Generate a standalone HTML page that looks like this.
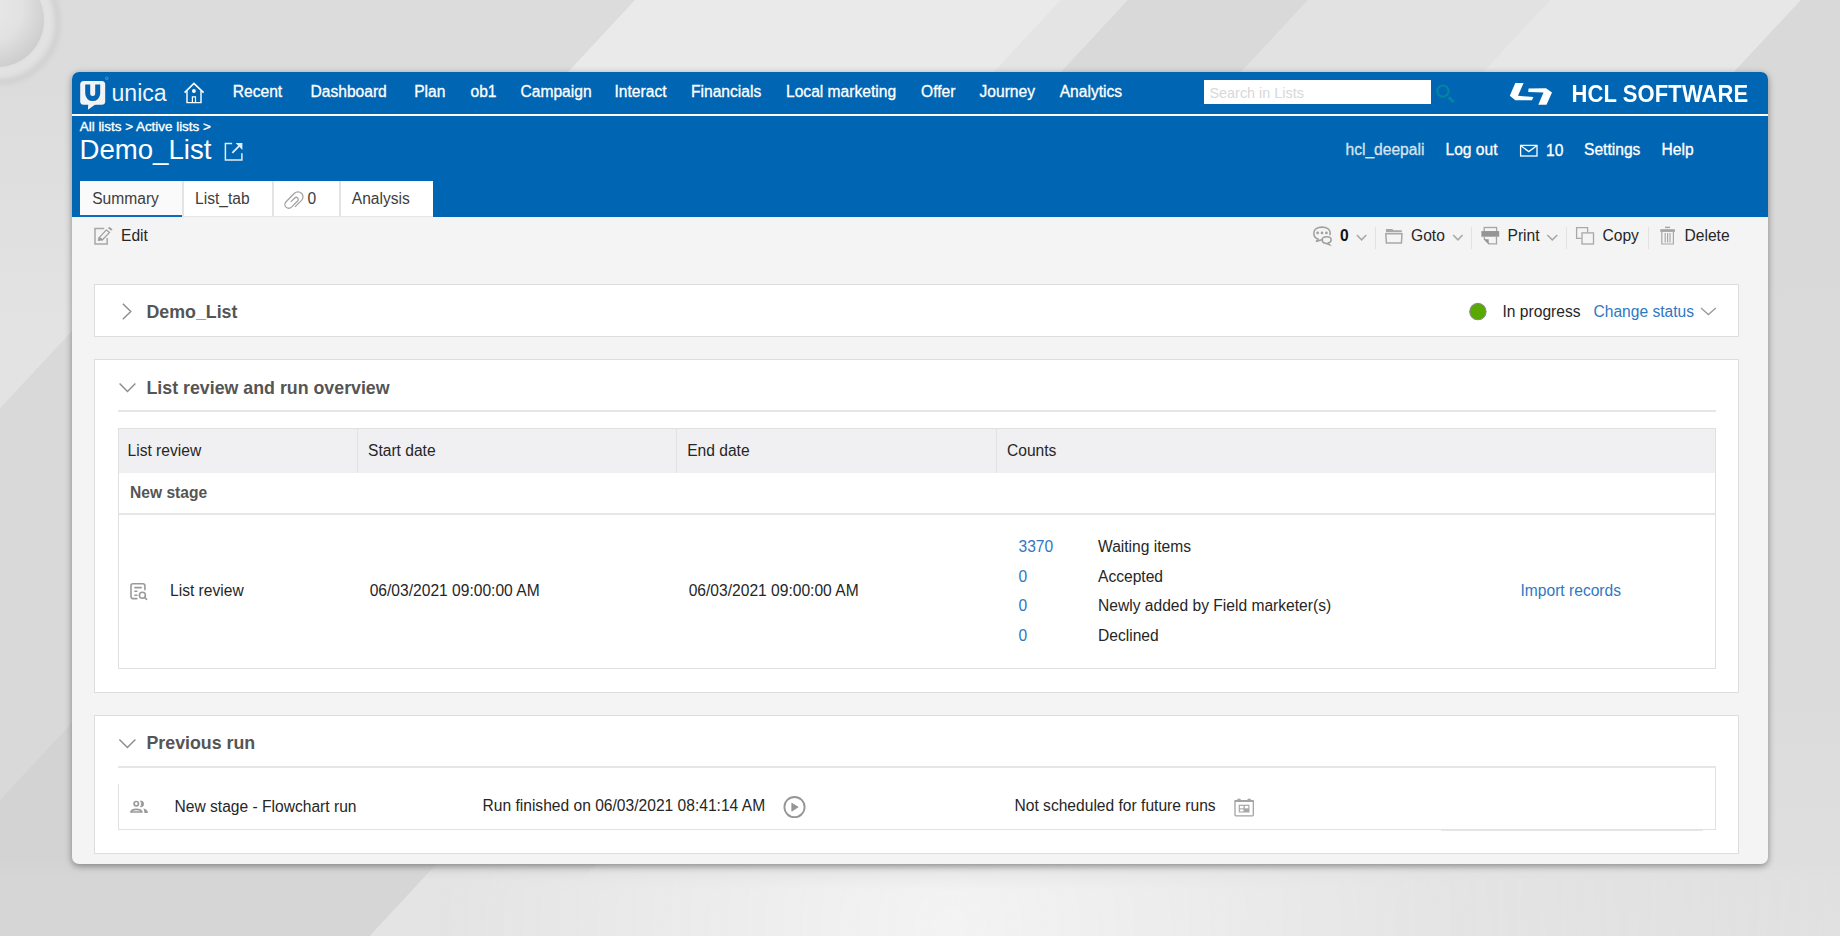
<!DOCTYPE html>
<html><head><meta charset="utf-8">
<style>
*{margin:0;padding:0;box-sizing:border-box}
html,body{width:1840px;height:936px;overflow:hidden}
body{position:relative;font-family:"Liberation Sans",sans-serif;background:#dcdcdc}
.a{position:absolute}
.t{position:absolute;white-space:nowrap;line-height:1}
#ov{position:absolute;left:0;top:0}
</style></head><body>
<svg width="1840" height="936" style="position:absolute;left:0;top:0">
<defs>
<linearGradient id="lgL" gradientUnits="userSpaceOnUse" x1="0" y1="90" x2="0" y2="330"><stop offset="0" stop-color="#dcdcdc"/><stop offset="1" stop-color="#e3e3e3"/></linearGradient>
<linearGradient id="lgB" gradientUnits="userSpaceOnUse" x1="0" y1="858" x2="0" y2="880"><stop offset="0" stop-color="#e4e4e4" stop-opacity="0"/><stop offset="1" stop-color="#e4e4e4"/></linearGradient><linearGradient id="lgBx" gradientUnits="userSpaceOnUse" x1="1400" y1="0" x2="1840" y2="0"><stop offset="0" stop-color="#fff"/><stop offset="1" stop-color="#fff" stop-opacity="0.25"/></linearGradient><mask id="mBx"><rect x="0" y="0" width="1840" height="936" fill="url(#lgBx)"/></mask>
<linearGradient id="lgB2" gradientUnits="userSpaceOnUse" x1="0" y1="858" x2="0" y2="880"><stop offset="0" stop-color="#d6d6d6" stop-opacity="0"/><stop offset="1" stop-color="#d6d6d6"/></linearGradient>
<radialGradient id="glow" cx="950" cy="925" r="520" gradientUnits="userSpaceOnUse"><stop offset="0" stop-color="#f3f3f3"/><stop offset="1" stop-color="#f3f3f3" stop-opacity="0"/></radialGradient>
<linearGradient id="glowfade" gradientUnits="userSpaceOnUse" x1="0" y1="860" x2="0" y2="890"><stop offset="0" stop-color="#fff" stop-opacity="0"/><stop offset="1" stop-color="#fff" stop-opacity="1"/></linearGradient>
<mask id="gm"><rect x="0" y="0" width="1840" height="936" fill="url(#glowfade)"/></mask>
<radialGradient id="orb" cx="-12" cy="8" r="62" gradientUnits="userSpaceOnUse"><stop offset="0" stop-color="#e8e8e8"/><stop offset="0.55" stop-color="#e2e2e2"/><stop offset="0.8" stop-color="#d6d6d6"/><stop offset="1" stop-color="#cdcdcd"/></radialGradient>
<linearGradient id="lgR" gradientUnits="userSpaceOnUse" x1="0" y1="80" x2="0" y2="936"><stop offset="0" stop-color="#d9d9d9"/><stop offset="0.7" stop-color="#dbdbdb"/><stop offset="1" stop-color="#e0e0e0"/></linearGradient>
<clipPath id="cpB"><rect x="0" y="0" width="1768" height="936"/></clipPath>
</defs>
<rect width="1840" height="936" fill="#dcdcdc"/>
<polygon points="635.0,0.0 1061.0,0.0 968.0,100.0 542.0,100.0" fill="#eaeaea" opacity="1"/>
<polygon points="1061.0,0.0 1128.0,0.0 1035.0,100.0 968.0,100.0" fill="#e4e4e4" opacity="1"/>
<polygon points="1128.0,0.0 1308.0,0.0 1215.0,100.0 1035.0,100.0" fill="#d9d9d9" opacity="1"/>
<polygon points="1308.0,0.0 1550.0,0.0 1457.0,100.0 1215.0,100.0" fill="#e2e2e2" opacity="1"/>
<polygon points="1550.0,0.0 1801.0,0.0 1708.0,100.0 1457.0,100.0" fill="#e7e7e7" opacity="1"/>
<polygon points="1801.0,0.0 3000.0,0.0 2129.5,936.0 930.5,936.0" fill="url(#lgR)" opacity="1"/>
<polygon points="-483.7,90.0 296.3,90.0 -103.6,520.0 -883.6,520.0" fill="url(#lgL)" opacity="1"/>
<polygon points="101.0,300.0 465.0,300.0 -126.5,936.0 -490.5,936.0" fill="#d9d9d9" opacity="1"/>
<polygon points="186.0,600.0 842.0,600.0 529.5,936.0 -126.5,936.0" fill="#d3d3d3" opacity="1"/>
<g><polygon points="-53.9,858.0 442.1,858.0 369.5,936.0 -126.5,936.0" fill="url(#lgB2)" opacity="1"/>
<g mask="url(#mBx)"><polygon points="442.1,858.0 2202.1,858.0 2129.5,936.0 369.5,936.0" fill="url(#lgB)" opacity="1"/>
</g></g><rect x="0" y="850" width="1840" height="86" fill="url(#glow)" mask="url(#gm)"/>
<filter id="bl3" x="-50%" y="-50%" width="200%" height="200%"><feGaussianBlur stdDeviation="2.5"/></filter>
<circle cx="-1" cy="23" r="59" fill="none" stroke="#cfcfcf" stroke-width="5" filter="url(#bl3)"/>
<circle cx="-3" cy="21" r="51" fill="none" stroke="#e3e3e3" stroke-width="9" filter="url(#bl3)"/>
<circle cx="-3" cy="20" r="47" fill="url(#orb)"/>
</svg>
<div class="a" style="left:72px;top:72px;width:1696px;height:792px;border-radius:7px;background:#f4f4f4;box-shadow:0 2px 7px rgba(0,0,0,.40)"></div>
<div class="a" style="left:72px;top:72px;width:1696px;height:42px;background:#0066b3;border-radius:7px 7px 0 0"></div>
<div class="a" style="left:72px;top:114px;width:1696px;height:2px;background:#fff"></div>
<div class="a" style="left:72px;top:116px;width:1696px;height:101px;background:#0066b3"></div>
<div class="t" style="left:232.8px;top:84.29px;font-size:15.6px;color:#fff;-webkit-text-stroke:0.3px #fff;">Recent</div>
<div class="t" style="left:310.5px;top:84.29px;font-size:15.6px;color:#fff;-webkit-text-stroke:0.3px #fff;">Dashboard</div>
<div class="t" style="left:414.2px;top:84.29px;font-size:15.6px;color:#fff;-webkit-text-stroke:0.3px #fff;">Plan</div>
<div class="t" style="left:470.5px;top:84.29px;font-size:15.6px;color:#fff;-webkit-text-stroke:0.3px #fff;">ob1</div>
<div class="t" style="left:520.5px;top:84.29px;font-size:15.6px;color:#fff;-webkit-text-stroke:0.3px #fff;">Campaign</div>
<div class="t" style="left:614.5px;top:84.29px;font-size:15.6px;color:#fff;-webkit-text-stroke:0.3px #fff;">Interact</div>
<div class="t" style="left:691.0px;top:84.29px;font-size:15.6px;color:#fff;-webkit-text-stroke:0.3px #fff;">Financials</div>
<div class="t" style="left:786.0px;top:84.29px;font-size:15.6px;color:#fff;-webkit-text-stroke:0.3px #fff;">Local marketing</div>
<div class="t" style="left:921.0px;top:84.29px;font-size:15.6px;color:#fff;-webkit-text-stroke:0.3px #fff;">Offer</div>
<div class="t" style="left:979.5px;top:84.29px;font-size:15.6px;color:#fff;-webkit-text-stroke:0.3px #fff;">Journey</div>
<div class="t" style="left:1059.7px;top:84.29px;font-size:15.6px;color:#fff;-webkit-text-stroke:0.3px #fff;">Analytics</div>
<div class="t" style="left:111.5px;top:82.05px;font-size:23.1px;color:#eef4fa;">unica</div>
<div class="a" style="left:1204px;top:80px;width:227px;height:24px;background:#fff"></div>
<div class="t" style="left:1209.5px;top:86.01px;font-size:14.4px;color:#d8d8d8;">Search in Lists</div>
<div class="t" style="left:1571.5px;top:83.78px;font-size:22.0px;color:#fff;font-weight:bold;transform:scaleY(1.09);transform-origin:0 18.6px;letter-spacing:0.1px;">HCL SOFTWARE</div>
<div class="t" style="left:79.8px;top:119.66px;font-size:13.4px;color:#fff;-webkit-text-stroke:0.35px #fff;">All lists &gt; Active lists &gt;</div>
<div class="t" style="left:79.5px;top:135.84px;font-size:27.6px;color:#fff;">Demo_List</div>
<div class="t" style="left:1345.5px;top:141.59px;font-size:15.6px;color:#d6e3f0;-webkit-text-stroke:0.3px #d6e3f0;">hcl_deepali</div>
<div class="t" style="left:1445.5px;top:141.59px;font-size:15.6px;color:#fff;-webkit-text-stroke:0.3px #fff;">Log out</div>
<div class="t" style="left:1546.0px;top:143.19px;font-size:15.6px;color:#fff;-webkit-text-stroke:0.3px #fff;">10</div>
<div class="t" style="left:1584.0px;top:141.59px;font-size:15.6px;color:#fff;-webkit-text-stroke:0.3px #fff;">Settings</div>
<div class="t" style="left:1661.5px;top:141.59px;font-size:15.6px;color:#fff;-webkit-text-stroke:0.3px #fff;">Help</div>
<div class="a" style="left:80px;top:181px;width:353px;height:36px;background:#fff"></div>
<div class="a" style="left:80px;top:216px;width:353px;height:1px;background:#e6e6e6"></div>
<div class="a" style="left:80px;top:181px;width:102px;height:34px;background:#fafafa"></div>
<div class="a" style="left:80px;top:215px;width:102px;height:2px;background:#0a6cbd"></div>
<div class="a" style="left:182px;top:181px;width:1.5px;height:35px;background:#e4e4e4"></div>
<div class="a" style="left:272px;top:181px;width:1.5px;height:35px;background:#e4e4e4"></div>
<div class="a" style="left:339px;top:181px;width:1.5px;height:35px;background:#e4e4e4"></div>
<div class="t" style="left:92.2px;top:190.79px;font-size:15.6px;color:#3d3d3d;">Summary</div>
<div class="t" style="left:195.0px;top:190.79px;font-size:15.6px;color:#3d3d3d;">List_tab</div>
<div class="t" style="left:307.5px;top:190.79px;font-size:15.6px;color:#3d3d3d;">0</div>
<div class="t" style="left:351.8px;top:190.79px;font-size:15.6px;color:#3d3d3d;">Analysis</div>
<div class="t" style="left:121.0px;top:227.89px;font-size:15.6px;color:#262626;">Edit</div>
<div class="t" style="left:1340.0px;top:227.89px;font-size:15.6px;color:#111;font-weight:bold;">0</div>
<div class="t" style="left:1411.0px;top:227.89px;font-size:15.6px;color:#262626;">Goto</div>
<div class="t" style="left:1507.5px;top:227.89px;font-size:15.6px;color:#262626;">Print</div>
<div class="t" style="left:1602.5px;top:227.89px;font-size:15.6px;color:#262626;">Copy</div>
<div class="t" style="left:1684.5px;top:227.89px;font-size:15.6px;color:#262626;">Delete</div>
<div class="a" style="left:1375px;top:227px;width:1px;height:22px;background:#e2e2e2"></div>
<div class="a" style="left:1471px;top:227px;width:1px;height:22px;background:#e2e2e2"></div>
<div class="a" style="left:1566px;top:227px;width:1px;height:22px;background:#e2e2e2"></div>
<div class="a" style="left:1648px;top:227px;width:1px;height:22px;background:#e2e2e2"></div>
<div class="a" style="left:94px;top:284px;width:1645px;height:53px;background:#fff;border:1px solid #dddddd"></div>
<div class="t" style="left:146.5px;top:304.33px;font-size:17.8px;color:#555;font-weight:bold;">Demo_List</div>
<div class="t" style="left:1502.5px;top:303.79px;font-size:15.6px;color:#262626;">In progress</div>
<div class="t" style="left:1593.5px;top:303.79px;font-size:15.6px;color:#2f78c2;">Change status</div>
<div class="a" style="left:94px;top:359px;width:1645px;height:334px;background:#fff;border:1px solid #dddddd"></div>
<div class="t" style="left:146.5px;top:379.63px;font-size:17.8px;color:#555;font-weight:bold;">List review and run overview</div>
<div class="a" style="left:118px;top:410px;width:1598px;height:2px;background:#e6e6e6"></div>
<div class="a" style="left:118px;top:428px;width:1598px;height:241px;background:#fff;border:1px solid #e0e0e0"></div>
<div class="a" style="left:119px;top:429px;width:1596px;height:44px;background:#f0f0f2"></div>
<div class="a" style="left:357px;top:429px;width:1px;height:44px;background:#e2e2e4"></div>
<div class="a" style="left:676px;top:429px;width:1px;height:44px;background:#e2e2e4"></div>
<div class="a" style="left:996px;top:429px;width:1px;height:44px;background:#e2e2e4"></div>
<div class="a" style="left:119px;top:513px;width:1596px;height:2px;background:#e6e6e6"></div>
<div class="t" style="left:127.5px;top:443.09px;font-size:15.6px;color:#262626;">List review</div>
<div class="t" style="left:368.0px;top:443.09px;font-size:15.6px;color:#262626;">Start date</div>
<div class="t" style="left:687.2px;top:443.09px;font-size:15.6px;color:#262626;">End date</div>
<div class="t" style="left:1007.0px;top:443.09px;font-size:15.6px;color:#262626;">Counts</div>
<div class="t" style="left:130.0px;top:484.69px;font-size:15.6px;color:#555;font-weight:bold;">New stage</div>
<div class="t" style="left:170.0px;top:583.39px;font-size:15.6px;color:#262626;">List review</div>
<div class="t" style="left:369.7px;top:583.39px;font-size:15.6px;color:#262626;">06/03/2021 09:00:00 AM</div>
<div class="t" style="left:688.7px;top:583.39px;font-size:15.6px;color:#262626;">06/03/2021 09:00:00 AM</div>
<div class="t" style="left:1018.5px;top:538.59px;font-size:15.6px;color:#2f78c2;">3370</div>
<div class="t" style="left:1098.0px;top:538.59px;font-size:15.6px;color:#262626;">Waiting items</div>
<div class="t" style="left:1018.5px;top:568.69px;font-size:15.6px;color:#2f78c2;">0</div>
<div class="t" style="left:1098.0px;top:568.69px;font-size:15.6px;color:#262626;">Accepted</div>
<div class="t" style="left:1018.5px;top:597.79px;font-size:15.6px;color:#2f78c2;">0</div>
<div class="t" style="left:1098.0px;top:597.79px;font-size:15.6px;color:#262626;">Newly added by Field marketer(s)</div>
<div class="t" style="left:1018.5px;top:628.09px;font-size:15.6px;color:#2f78c2;">0</div>
<div class="t" style="left:1098.0px;top:628.09px;font-size:15.6px;color:#262626;">Declined</div>
<div class="t" style="left:1520.5px;top:583.09px;font-size:15.6px;color:#2f78c2;">Import records</div>
<div class="a" style="left:94px;top:715px;width:1645px;height:139px;background:#fff;border:1px solid #dddddd"></div>
<div class="t" style="left:146.5px;top:735.13px;font-size:17.8px;color:#555;font-weight:bold;">Previous run</div>
<div class="a" style="left:118px;top:766px;width:1598px;height:2px;background:#e6e6e6"></div>
<div class="a" style="left:118px;top:784px;width:1px;height:46px;background:#e2e2e2"></div>
<div class="a" style="left:1715px;top:768px;width:1px;height:62px;background:#e2e2e2"></div>
<div class="a" style="left:118px;top:829px;width:1598px;height:1px;background:#e2e2e2"></div>
<div class="a" style="left:1441px;top:830px;width:262px;height:1px;background:#e6e6e6"></div>
<div class="t" style="left:174.5px;top:798.59px;font-size:15.6px;color:#262626;">New stage - Flowchart run</div>
<div class="t" style="left:482.5px;top:798.19px;font-size:15.6px;color:#262626;">Run finished on 06/03/2021 08:41:14 AM</div>
<div class="t" style="left:1014.5px;top:798.19px;font-size:15.6px;color:#262626;">Not scheduled for future runs</div>
<svg id="ov" width="1840" height="936" viewBox="0 0 1840 936" style="position:absolute;left:0;top:0">
<!-- unica logo -->
<rect x="80.2" y="81" width="25" height="23.8" rx="3.5" fill="#f2f3f5"/>
<path d="M88.3 104 L87.9 109.7 L96 104 Z" fill="#f2f3f5"/>
<path d="M87.7 84.6 V93.6 A5 5 0 0 0 97.7 93.6 V84.6" fill="none" stroke="#0066b3" stroke-width="5"/>
<circle cx="106.8" cy="78.3" r="1.3" fill="none" stroke="#6fa3d6" stroke-width="0.7"/>
<!-- home -->
<g fill="none" stroke="#fff" stroke-width="1.6" stroke-linejoin="miter">
<path d="M184.6 92.6 L193.9 83.4 L203.6 92.6"/>
<path d="M187 91 V102.6 H201 V91" stroke-width="1.4"/>
<path d="M192.4 102.6 V96.9 H195.5 V102.6" stroke-width="1.2"/>
</g>
<circle cx="193.9" cy="91" r="1.9" fill="#fff"/>
<!-- search -->
<circle cx="1442.9" cy="91.1" r="5.6" fill="none" stroke="#00879e" stroke-width="2"/>
<path d="M1448.6 97.4 L1453.6 102" stroke="#00879e" stroke-width="3"/>
<!-- HCL mark -->
<path d="M1515.3 83.1 H1523.6 L1518 95.8 L1533.4 97.1 L1532 100.2 H1515.3 L1509.8 95.8 Z" fill="#fff"/>
<path d="M1528.6 88.6 L1546 88.3 L1552 92.4 L1546.5 104.7 H1538.3 L1543.5 92.4 L1528.2 92 Z" fill="#fff"/>
<!-- ext link -->
<g fill="none" stroke="#e3ecf5" stroke-width="1.5">
<path d="M232.1 143.5 H225.4 V159.9 H241.9 V153.3"/>
<path d="M232.3 152.9 L239.8 145.4" stroke-width="1.8"/>
</g>
<path d="M235.6 143.1 H242.4 V149.9 Z" fill="#e3ecf5"/>
<!-- mail -->
<g fill="none" stroke="#fff" stroke-width="1.3">
<rect x="1520.6" y="145.4" width="16.4" height="10.6"/>
<path d="M1520.9 145.8 L1528.8 151.6 L1536.7 145.8"/>
</g>
<!-- paperclip -->
<g transform="translate(298 196.8) rotate(45)" fill="none" stroke="#a3a3a3" stroke-width="1.3">
<path d="M5 9.3 V0 A5 5 0 0 0 -5 0 V11.9 A3.85 3.85 0 0 0 2.7 11.9 V3.2 A2.1 2.1 0 0 0 -1.5 3.2 V8.7"/>
</g>
<!-- edit -->
<path d="M104.2 228.4 H95 V244 H107.2 V238.1" fill="none" stroke="#a6a6a6" stroke-width="1.5"/>
<path d="M99.2 237.6 L106.4 229.9 L109.6 232.4 L102.5 239.8 Z" fill="none" stroke="#a0a0a0" stroke-width="1.3" stroke-linejoin="round"/>
<path d="M99 237.4 L98.06 240.6 L102.6 240 Z" fill="#9a9a9a" stroke="#9a9a9a" stroke-width="0.8" stroke-linejoin="round"/>
<path d="M108.6 227.4 L111.9 230.1" stroke="#a0a0a0" stroke-width="1.9"/>
<!-- comments -->
<g fill="none" stroke="#a0a0a0" stroke-width="1.55">
<path d="M1318.6 239.2 C1315.6 238.4 1313.8 236 1313.8 232.9 C1313.8 229.4 1317.5 227.1 1322 227.1 C1326.6 227.1 1330.2 229.4 1330.2 232.9 C1330.2 233.8 1330 234.5 1329.6 235.2"/>
<path d="M1318.6 239.2 L1316 241.6 L1322.6 239.4"/>
<path d="M1326.7 236.7 C1329.4 236.7 1331.2 238 1331.2 239.9 C1331.2 241.3 1330 242.4 1328.4 242.9 L1329.6 244.6 L1325.6 243.2 C1323.6 243 1322.2 241.7 1322.2 239.9 C1322.2 238 1324 236.7 1326.7 236.7 Z"/>
</g>
<g fill="#a0a0a0"><circle cx="1317.6" cy="232.9" r="1.35"/><circle cx="1322" cy="232.9" r="1.35"/><circle cx="1326.4" cy="232.9" r="1.35"/></g>
<!-- chevrons toolbar -->
<g fill="none" stroke="#a8a8a8" stroke-width="1.55">
<path d="M1356.9 235 L1361.6 239.9 L1366.3 235"/>
<path d="M1453.2 235 L1457.9 239.9 L1462.6 235"/>
<path d="M1547.3 235 L1552.3 239.9 L1557.3 235"/>
</g>
<!-- folder -->
<g fill="none" stroke="#a8a8a8" stroke-width="1.5">
<path d="M1385.8 233.8 H1402 L1401.4 243 H1386.4 Z"/>
</g>
<path d="M1386 229 H1392.4 L1393.4 230.3 H1401.8 V232.2 H1386 Z" fill="#a8a8a8"/>
<!-- printer -->
<g fill="none" stroke="#a5a5a5" stroke-width="1.3">
<rect x="1484.2" y="227.5" width="12.4" height="4.4"/>
<path d="M1484.4 236.7 V239.3 L1489 243.8 H1496.5 V236.7"/>
</g>
<rect x="1481.4" y="231.1" width="17.8" height="5.6" fill="#959595"/>
<path d="M1484 239.3 H1488.7 V244.4 Z" fill="#959595"/>
<!-- copy -->
<g fill="none" stroke="#a8a8a8" stroke-width="1.3">
<path d="M1581.4 238.3 H1576.6 V227.7 H1587.6 V232.4"/>
<rect x="1582" y="232.9" width="11.5" height="11.1"/>
</g>
<!-- trash -->
<g fill="#a3a3a3">
<rect x="1665" y="226.7" width="5" height="1.4"/>
<rect x="1660.3" y="229.2" width="14.6" height="2.7"/>
</g>
<g fill="none" stroke="#a8a8a8" stroke-width="1.2">
<path d="M1661.8 232 V244 H1673.4 V232"/>
<path d="M1665.2 233 V242.6 M1667.6 233 V242.6 M1670 233 V242.6"/>
</g>
<!-- panel chevrons -->
<path d="M122.8 303.8 L130.8 311.5 L122.8 319.2" fill="none" stroke="#8c8c8c" stroke-width="1.4"/>
<path d="M119.6 383.4 L127.5 391.4 L135.4 383.4" fill="none" stroke="#8c8c8c" stroke-width="1.4"/>
<path d="M119.4 739.4 L127.4 747.5 L135.4 739.4" fill="none" stroke="#8c8c8c" stroke-width="1.4"/>
<path d="M1701 308 L1708.4 314.6 L1715.8 308" fill="none" stroke="#999" stroke-width="1.3"/>
<!-- green dot -->
<circle cx="1477.9" cy="311.6" r="8.2" fill="#58a900" stroke="#8a8a8a" stroke-width="1.1"/>
<!-- list review icon -->
<g fill="none" stroke="#9a9a9a" stroke-width="1.6" stroke-linecap="round">
<path d="M136.9 598.6 H133 A2 2 0 0 1 131 596.6 V585.8 A2 2 0 0 1 133 583.8 H142.9 A2 2 0 0 1 144.9 585.8 V589.7"/>
<path d="M134.9 587.6 H141.2 M134.9 591.3 H136.9 M134.9 595.2 H136.9"/>
<circle cx="142.4" cy="595.2" r="3"/>
<path d="M144.6 597.4 L146.6 599.3"/>
</g>
<!-- people -->
<g fill="none" stroke="#9a9a9a" stroke-width="1.7">
<circle cx="136.3" cy="803.7" r="2.2"/>
<path d="M131 812 C131.5 809.9 133.6 809.3 136.4 809.3 C139.2 809.3 141.3 809.9 141.8 812 Z"/>
</g>
<path d="M140.6 800.9 A3 3 0 0 1 140.6 806.9 A5 5 0 0 0 140.6 800.9 Z" fill="#9a9a9a" stroke="#9a9a9a" stroke-width="0.9"/>
<path d="M143.4 808.6 C146.2 809.1 147.8 810.6 148 812.9 H144.4 C144.4 811.2 144.1 809.8 143.4 808.6 Z" fill="#9a9a9a"/>
<!-- play -->
<circle cx="794.5" cy="807.1" r="10.1" fill="none" stroke="#959595" stroke-width="1.8"/>
<path d="M791.8 803.2 V811.2 L798.2 807.1 Z" fill="#959595" stroke="#959595" stroke-width="0.8" stroke-linejoin="round"/>
<!-- calendar -->
<g fill="none" stroke="#a3a3a3" stroke-width="1.3">
<rect x="1235" y="800.7" width="18.3" height="15.2" rx="0.8"/>
<path d="M1237.6 800.7 A1.4 1.6 0 0 1 1240.4 800.7 M1247.8 800.7 A1.4 1.6 0 0 1 1250.6 800.7"/>
</g>
<rect x="1234.6" y="800.2" width="19" height="1.8" fill="#a3a3a3"/>
<rect x="1238.7" y="804.7" width="10.8" height="7.8" fill="#a8a8a8"/>
<g fill="#fff"><rect x="1239.9" y="805.9" width="3.6" height="2.4"/><rect x="1244.8" y="805.9" width="3.5" height="2.4"/><rect x="1239.9" y="809.4" width="3.6" height="2"/></g>
</svg>
</body></html>
